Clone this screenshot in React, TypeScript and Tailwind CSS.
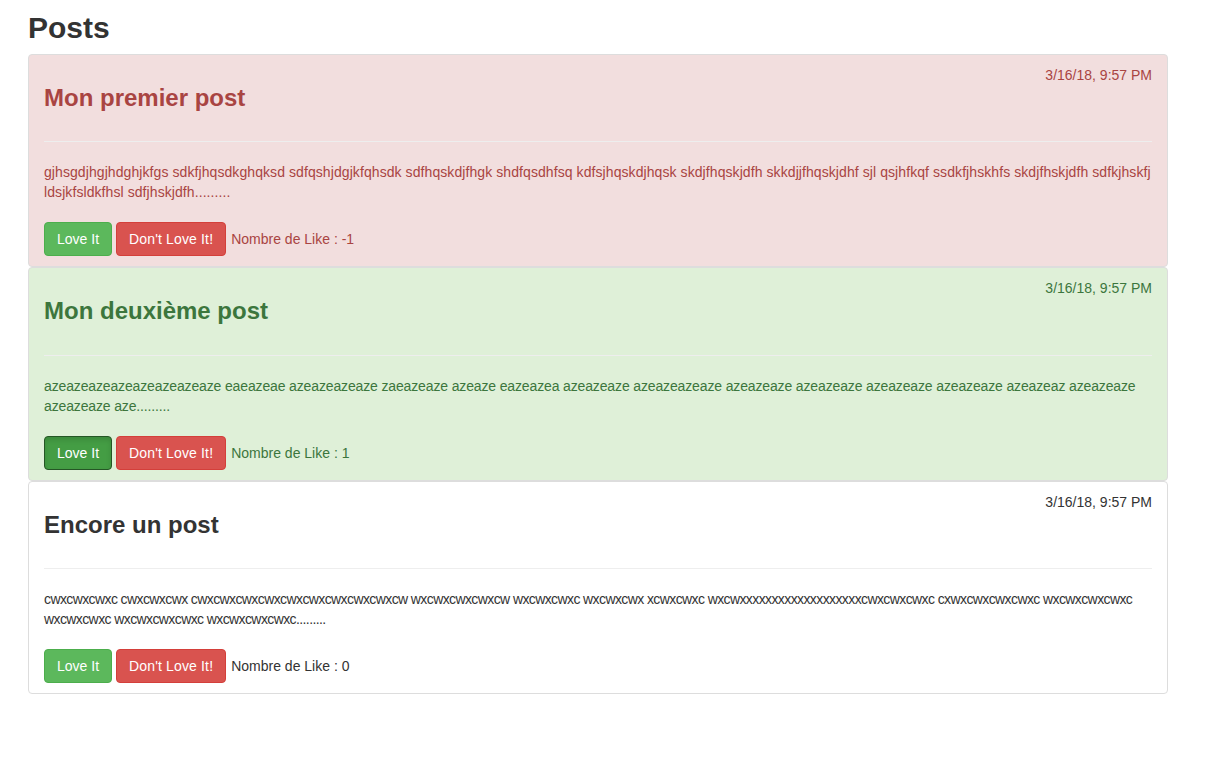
import React from "react";

type Variant = "danger" | "success" | "default";

const posts: {
  title: string;
  content: string;
  likes: number;
  variant: Variant;
  loveActive?: boolean;
  textClass: string;
}[] = [
  {
    title: "Mon premier post",
    content:
      "gjhsgdjhgjhdghjkfgs sdkfjhqsdkghqksd sdfqshjdgjkfqhsdk sdfhqskdjfhgk shdfqsdhfsq kdfsjhqskdjhqsk skdjfhqskjdfh skkdjjfhqskjdhf sjl qsjhfkqf ssdkfjhskhfs skdjfhskjdfh sdfkjhskfj ldsjkfsldkfhsl sdfjhskjdfh.........",
    likes: -1,
    variant: "danger",
    textClass: "tracking-[0.08px]",
  },
  {
    title: "Mon deuxième post",
    content:
      "azeazeazeazeazeazeazeaze eaeazeae azeazeazeaze zaeazeaze azeaze eazeazea azeazeaze azeazeazeaze azeazeaze azeazeaze azeazeaze azeazeaze azeazeaz azeazeaze azeazeaze aze.........",
    likes: 1,
    variant: "success",
    loveActive: true,
    textClass: "tracking-[-0.14px]",
  },
  {
    title: "Encore un post",
    content:
      "cwxcwxcwxc cwxcwxcwx cwxcwxcwxcwxcwxcwxcwxcwxcwxcw wxcwxcwxcwxcw wxcwxcwxc wxcwxcwx xcwxcwxc wxcwxxxxxxxxxxxxxxxxxxxcwxcwxcwxc cxwxcwxcwxcwxc wxcwxcwxcwxc wxcwxcwxc wxcwxcwxcwxc wxcwxcwxcwxc.........",
    likes: 0,
    variant: "default",
    textClass: "tracking-[-0.6px]",
  },
];

const variantClasses: Record<Variant, string> = {
  danger: "bg-[#f2dede] text-[#a94442]",
  success: "bg-[#dff0d8] text-[#3c763d]",
  default: "bg-white text-[#333333]",
};

export default function App() {
  return (
    <div
      className="min-h-screen bg-white text-[#333333] text-[14px] leading-5"
      style={{ fontFamily: '"Liberation Sans", Arial, Helvetica, sans-serif' }}
    >
      <div className="pl-[28px] pt-[11px]">
        <h2 className="text-[30px] leading-[33px] font-bold mb-[10px] text-[#333333]">Posts</h2>
        <div className="w-[1140px] flex flex-col">
          {posts.map((p) => (
            <div
              key={p.title}
              className={`border border-[#dddddd] rounded-[4px] px-[15px] py-[10px] ${variantClasses[p.variant]}`}
            >
              <div className="float-right leading-5">3/16/18, 9:57 PM</div>
              <h3 className="mt-5 mb-[10px] text-[24px] leading-[26.4px] font-bold">{p.title}</h3>
              <hr className="mt-[30px] mb-5 border-0 border-t border-[#eeeeee]" />
              <p className={`mb-[10px] leading-5 ${p.textClass}`}>{p.content}</p>
              <div className="mt-5 flex items-center gap-1">
                <button
                  className={
                    p.loveActive
                      ? "px-3 py-[6px] leading-5 text-[14px] rounded-[4px] border border-[#255625] bg-[#449d44] text-white shadow-[inset_0_3px_5px_rgba(0,0,0,0.125)]"
                      : "px-3 py-[6px] leading-5 text-[14px] rounded-[4px] border border-[#4cae4c] bg-[#5cb85c] text-white"
                  }
                >
                  Love It
                </button>
                <button className="px-3 py-[6px] leading-5 text-[14px] tracking-[0.15px] rounded-[4px] border border-[#d43f3a] bg-[#d9534f] text-white">
                  Don't Love It!
                </button>
                <span className="leading-5 ml-[1px]">Nombre de Like : {p.likes}</span>
              </div>
            </div>
          ))}
        </div>
      </div>
    </div>
  );
}
